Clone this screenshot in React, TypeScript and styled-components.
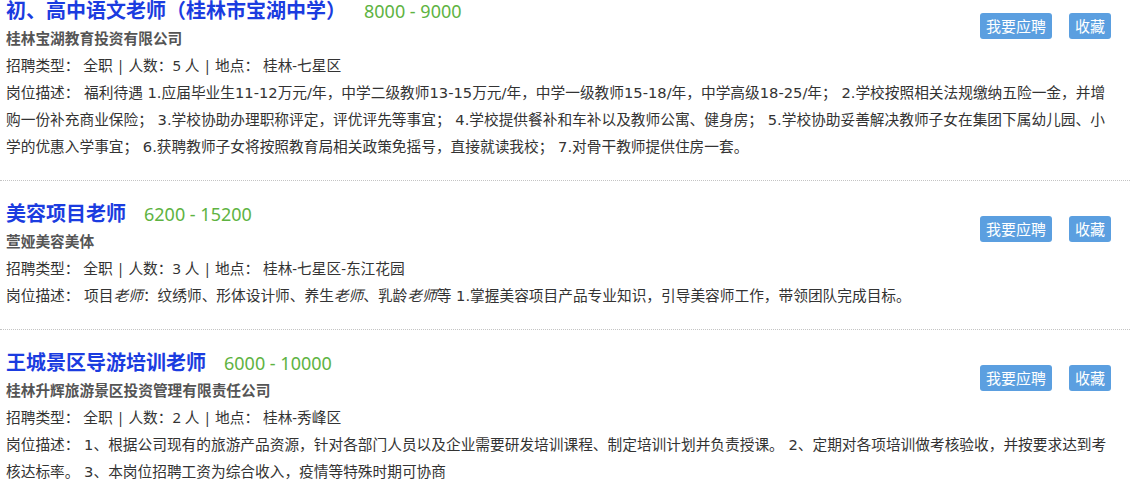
import React from 'react'
import styled, { createGlobalStyle } from 'styled-components'

const GlobalStyle = createGlobalStyle`
  body {
    margin: 0;
    background: #fff;
    font-family: "Noto Sans", "Noto Sans CJK SC", sans-serif;
    color: #333;
  }
`

type Job = {
  title: string
  salary: string
  company: string
  type: string
  count: number
  place: string
  desc: React.ReactNode
}

const jobs: Job[] = [
  {
    title: '初、高中语文老师（桂林市宝湖中学）',
    salary: '8000 - 9000',
    company: '桂林宝湖教育投资有限公司',
    type: '全职',
    count: 5,
    place: '桂林-七星区',
    desc:
      '福利待遇 1.应届毕业生11-12万元/年，中学二级教师13-15万元/年，中学一级教师15-18/年，中学高级18-25/年； 2.学校按照相关法规缴纳五险一金，并增购一份补充商业保险； 3.学校协助办理职称评定，评优评先等事宜； 4.学校提供餐补和车补以及教师公寓、健身房； 5.学校协助妥善解决教师子女在集团下属幼儿园、小学的优惠入学事宜； 6.获聘教师子女将按照教育局相关政策免摇号，直接就读我校； 7.对骨干教师提供住房一套。',
  },
  {
    title: '美容项目老师',
    salary: '6200 - 15200',
    company: '萱娅美容美体',
    type: '全职',
    count: 3,
    place: '桂林-七星区-东江花园',
    desc: (
      <>
        项目<em>老师</em>：纹绣师、形体设计师、养生<em>老师</em>、乳龄<em>老师</em>等 1.掌握美容项目产品专业知识，引导美容师工作，带领团队完成目标。
      </>
    ),
  },
  {
    title: '王城景区导游培训老师',
    salary: '6000 - 10000',
    company: '桂林升辉旅游景区投资管理有限责任公司',
    type: '全职',
    count: 2,
    place: '桂林-秀峰区',
    desc:
      '1、根据公司现有的旅游产品资源，针对各部门人员以及企业需要研发培训课程、制定培训计划并负责授课。 2、定期对各项培训做考核验收，并按要求达到考核达标率。 3、本岗位招聘工资为综合收入，疫情等特殊时期可协商',
  },
]

export default function App() {
  return (
    <>
      <GlobalStyle />
      <List>
        {jobs.map((job, i) => (
          <Card key={i}>
            <Header>
              <div>
                <TitleRow>
                  <Title href="#">{job.title}</Title>
                  <Salary>{job.salary}</Salary>
                </TitleRow>
                <Company>{job.company}</Company>
              </div>
              <Actions>
                <Button>我要应聘</Button>
                <Button>收藏</Button>
              </Actions>
            </Header>
            <Line>
              招聘类型：&nbsp;{job.type} | 人数：{job.count} 人 | 地点：&nbsp;{job.place}
            </Line>
            <Desc>岗位描述：&nbsp;{job.desc}</Desc>
          </Card>
        ))}
      </List>
    </>
  )
}

const List = styled.div`
  width: 1130px;
  margin-top: -3px;
`

const Card = styled.div`
  padding: 19px 12px 20px 6px;
  border-bottom: 1px dotted #c4c4c4;
  &:first-child {
    padding-top: 0;
  }
`

const Header = styled.div`
  display: flex;
  align-items: center;
  justify-content: space-between;
`

const TitleRow = styled.div`
  display: flex;
  align-items: baseline;
  gap: 18px;
  line-height: 28px;
`

const Title = styled.a`
  font-size: 20px;
  font-weight: 700;
  color: #1b3ce0;
  text-decoration: none;
`

const Salary = styled.span`
  font-size: 18px;
  color: #5eb342;
`

const Company = styled.div`
  font-size: 14.7px;
  font-weight: 700;
  color: #555;
  line-height: 27px;
`

const Actions = styled.div`
  display: flex;
  gap: 17px;
  margin: 3px 7px 0 0;
`

const Button = styled.button`
  height: 26px;
  padding: 0 6px;
  border: none;
  border-radius: 3px;
  background: #5b9fe0;
  color: #fff;
  font-family: inherit;
  font-size: 15px;
  line-height: 26px;
  cursor: pointer;
`

const Line = styled.div`
  font-size: 14.7px;
  line-height: 27px;
  color: #333;
`

const Desc = styled(Line)`
  font-family: "DejaVu Sans", "Noto Sans CJK SC", sans-serif;
  em {
    font-style: italic;
  }
`
